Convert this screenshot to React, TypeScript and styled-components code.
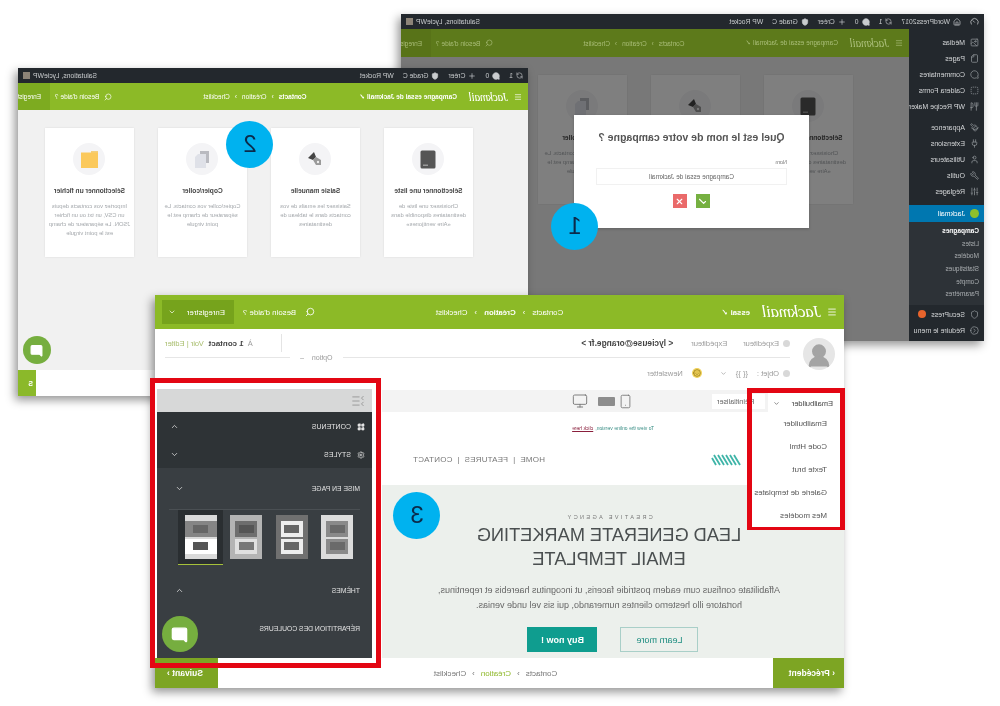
import React from 'react';
import styled, { createGlobalStyle } from 'styled-components';
import {
  Image, File, MessageCircle, SquareDashed, Utensils, Paintbrush, Plug, User, Wrench, Sliders, Shield,
  CircleChevronLeft, Home, Gauge, RefreshCw, Plus, Search, ChevronDown, ChevronUp, Menu, Monitor,
  Smartphone, LayoutGrid, Settings, Check, X, Smile, ListCollapse, UserRound, MessageSquare,
} from 'lucide-react';

const GlobalStyle = createGlobalStyle`
  html, body { margin: 0; padding: 0; background: #fff; }
  body { font-family: "Liberation Sans", Arial, sans-serif; }
  * { box-sizing: border-box; }
`;

// the whole reference is a mirrored picture, so the page is built normally and flipped once
const Stage = styled.div`
  position: relative;
  width: 1000px;
  height: 706px;
  overflow: hidden;
  background: #fff;
  transform: scaleX(-1);
  filter: blur(0.45px);
`;

const Win = styled.section<{ $x: number; $y: number; $w: number; $h: number }>`
  position: absolute;
  left: ${p => p.$x}px;
  top: ${p => p.$y}px;
  width: ${p => p.$w}px;
  height: ${p => p.$h}px;
  display: flex;
  flex-direction: column;
  background: #fff;
  box-shadow: 3px 4px 9px rgba(0, 0, 0, 0.42);
`;

const AdminBar = styled.div`
  height: 15px;
  flex: none;
  background: #23282d;
  color: #c9ccce;
  font-size: 6.8px;
  display: flex;
  align-items: center;
  gap: 9px;
  padding: 0 5px;
`;

const AdminItem = styled.span`
  display: inline-flex;
  align-items: center;
  gap: 3px;
  white-space: nowrap;
`;

const AdminEnd = styled(AdminItem)`
  margin-left: auto;
`;

const Avatarlet = styled.span`
  width: 7px;
  height: 7px;
  background: #8d8478;
`;

const GreenBar = styled.header<{ $h: number; $bg: string; $fs: number; $pr: number; $pl: number }>`
  height: ${p => p.$h}px;
  flex: none;
  background: ${p => p.$bg};
  color: #fff;
  font-size: ${p => p.$fs}px;
  display: grid;
  grid-template-columns: 1fr auto 1fr;
  align-items: center;
  padding: 0 ${p => p.$pr}px 0 ${p => p.$pl}px;
`;

const BarLeft = styled.div<{ $dim?: boolean }>`
  display: flex;
  align-items: center;
  gap: 6px;
  color: ${p => (p.$dim ? '#a9bd78' : 'inherit')};
`;

const BarRight = styled.div<{ $dim?: boolean; $gap: number }>`
  display: flex;
  align-items: center;
  justify-content: flex-end;
  gap: ${p => p.$gap}px;
  color: ${p => (p.$dim ? '#a9bd78' : 'inherit')};
`;

const Logo = styled.span<{ $fs: number }>`
  font-family: "Liberation Serif", serif;
  font-style: italic;
  font-size: ${p => p.$fs}px;
  letter-spacing: -0.3px;
  margin-right: 6px;
`;

const Crumbs = styled.div<{ $gap: number; $ml?: number; $dim?: boolean }>`
  display: flex;
  align-items: center;
  gap: ${p => p.$gap}px;
  margin-left: ${p => p.$ml ?? 0}px;
  color: ${p => (p.$dim ? '#a9bd78' : 'inherit')};
`;

const Crumb = styled.span<{ $on?: boolean; $green?: boolean }>`
  font-weight: ${p => (p.$on ? 700 : 400)};
  color: ${p => (p.$green ? '#8fb82a' : 'inherit')};
`;

const SaveButton = styled.div<{ $w: number; $h: number; $bg: string }>`
  width: ${p => p.$w}px;
  height: ${p => p.$h}px;
  background: ${p => p.$bg};
  display: flex;
  align-items: center;
  justify-content: space-between;
  padding: 0 6px 0 9px;
  overflow: hidden;
  white-space: nowrap;
`;

const Desk = styled.div`
  flex: 1;
  display: flex;
  min-height: 0;
`;

const SideMenu = styled.nav`
  width: 75px;
  flex: none;
  background: #23282d;
  color: #d4d6d8;
  font-size: 7px;
  display: flex;
  flex-direction: column;
  padding-top: 5px;
`;

const SideItem = styled.div<{ $active?: boolean; $after?: number }>`
  height: ${p => (p.$active ? 17 : 16)}px;
  display: flex;
  align-items: center;
  gap: 5px;
  padding-left: 5px;
  margin-bottom: ${p => p.$after ?? 0}px;
  white-space: nowrap;
  background: ${p => (p.$active ? '#0077b0' : 'transparent')};
  color: ${p => (p.$active ? '#fff' : 'inherit')};
  svg { color: #8f9498; flex: none; }
`;

const JackDot = styled.span`
  width: 9px;
  height: 9px;
  border-radius: 50%;
  background: #8fc02c;
  flex: none;
`;

const SubMenu = styled.div`
  background: #2d3237;
  padding: 3px 0 4px 5px;
  display: flex;
  flex-direction: column;
  margin-bottom: 1px;
`;

const SubItem = styled.span<{ $on?: boolean }>`
  height: 12.7px;
  line-height: 12.7px;
  font-size: 6.5px;
  color: ${p => (p.$on ? '#fff' : '#a9adb0')};
  font-weight: ${p => (p.$on ? 700 : 400)};
`;

const Badge = styled.span`
  width: 8px;
  height: 8px;
  border-radius: 50%;
  background: #e8642c;
`;

const Main = styled.div`
  flex: 1;
  display: flex;
  flex-direction: column;
  min-width: 0;
`;

const Content = styled.div<{ $pad: number; $pt: number }>`
  position: relative;
  flex: 1;
  background: #f1f1f1;
  display: flex;
  align-items: flex-start;
  gap: 24px;
  padding: ${p => p.$pt}px 0 0 ${p => p.$pad}px;
`;

const Shade = styled.div`
  position: absolute;
  inset: 0;
  background: rgba(0, 0, 0, 0.5);
`;

const Card = styled.article`
  width: 89px;
  height: 129px;
  flex: none;
  background: #fff;
  box-shadow: 0 0 2px rgba(0, 0, 0, 0.1);
  display: flex;
  flex-direction: column;
  align-items: center;
  padding: 15px 3px 0;
  text-align: center;
`;

const Disc = styled.div`
  width: 32px;
  height: 32px;
  border-radius: 50%;
  background: #f4f4f6;
  display: flex;
  align-items: center;
  justify-content: center;
`;

const CardTitle = styled.h4`
  margin: 11px 0 7px;
  font-size: 6.6px;
  line-height: 9px;
  color: #444;
  white-space: nowrap;
`;

const CardText = styled.p`
  margin: 0;
  font-size: 5.8px;
  line-height: 9px;
  color: #a3a7ab;
`;

const Modal = styled.div`
  position: absolute;
  left: 100px;
  top: 58px;
  width: 235px;
  height: 113px;
  background: #fff;
  padding: 15px 22px 0;
  display: flex;
  flex-direction: column;
  box-shadow: 0 1px 3px rgba(0, 0, 0, 0.2);
`;

const ModalTitle = styled.h3`
  margin: 0 0 15px;
  font-size: 10.5px;
  line-height: 14px;
  color: #555;
  text-align: center;
  white-space: nowrap;
`;

const ModalLabel = styled.label`
  font-size: 5.5px;
  color: #777;
  margin-bottom: 3px;
`;

const ModalInput = styled.div`
  height: 17px;
  border: 1px solid #f1f1f1;
  font-size: 6.5px;
  color: #666;
  display: flex;
  align-items: center;
  justify-content: center;
`;

const ModalActions = styled.div`
  display: flex;
  justify-content: center;
  gap: 9px;
  margin-top: 9px;
`;

const SquareBtn = styled.div<{ $bg: string }>`
  width: 14px;
  height: 14px;
  background: ${p => p.$bg};
  color: #fff;
  display: flex;
  align-items: center;
  justify-content: center;
`;

const BottomStrip = styled.div`
  height: 26px;
  flex: none;
  background: #fff;
  display: flex;
  justify-content: flex-end;
`;

const StripBtn = styled.div`
  width: 18px;
  background: #8bb92a;
  color: #fff;
  font-size: 7px;
  display: flex;
  align-items: center;
  padding-left: 3px;
  font-weight: 700;
`;

const Bubble = styled.div<{ $x: number; $y: number; $size: number }>`
  position: absolute;
  left: ${p => p.$x}px;
  top: ${p => p.$y}px;
  width: ${p => p.$size}px;
  height: ${p => p.$size}px;
  border-radius: 50%;
  background: #76ae3f;
  color: #fff;
  display: flex;
  align-items: center;
  justify-content: center;
  z-index: 5;
  svg { fill: #fff; }
`;

const Step = styled.div<{ $cx: number; $cy: number }>`
  position: absolute;
  left: ${p => p.$cx - 23.5}px;
  top: ${p => p.$cy - 23.5}px;
  width: 47px;
  height: 47px;
  border-radius: 50%;
  background: #00b2ef;
  color: #0b2a4a;
  font-size: 24px;
  display: flex;
  align-items: center;
  justify-content: center;
  z-index: 10;
`;

/* third window */
const Recipients = styled.div`
  height: 61px;
  flex: none;
  display: grid;
  grid-template-columns: 48px 1fr;
  background: #fff;
`;

const AvatarCol = styled.div`
  display: flex;
  justify-content: center;
  padding: 9px 0 0 2px;
`;

const AvatarPic = styled.div`
  width: 32px;
  height: 32px;
  border-radius: 50%;
  background: #e6e6e6;
  overflow: hidden;
  display: flex;
  align-items: flex-end;
  justify-content: center;
  svg { fill: #a4a4a4; color: #a4a4a4; }
`;

const RecCol = styled.div`
  display: flex;
  flex-direction: column;
  font-size: 7.5px;
  color: #8c8c8c;
  padding-right: 10px;
  padding-left: 6px;
`;

const RecTop = styled.div`
  height: 28px;
  display: flex;
  align-items: center;
`;

const Pale = styled.span<{ $ml?: number }>`
  margin-left: ${p => p.$ml ?? 0}px;
  color: #9b9b9b;
  white-space: nowrap;
  display: inline-flex;
  align-items: center;
  gap: 4px;
`;

const Strong = styled.span<{ $ml?: number; $fs: number }>`
  margin-left: ${p => p.$ml ?? 0}px;
  font-weight: 700;
  font-size: ${p => p.$fs}px;
  color: #444;
  white-space: nowrap;
`;

const VRule = styled.span`
  width: 1px;
  height: 18px;
  background: #e4e4e4;
  margin-left: auto;
`;

const Links = styled.span`
  color: #a8bd6c;
  margin-left: 5px;
  white-space: nowrap;
`;

const Dot = styled.span`
  width: 7px;
  height: 7px;
  border-radius: 50%;
  background: #d8d8d8;
  display: inline-block;
`;

const OptionRule = styled.div`
  display: flex;
  align-items: center;
  height: 1px;
  background: #e6e6e6;
  justify-content: flex-end;
`;

const OptionTag = styled.span`
  background: #fff;
  padding: 0 10px;
  margin-right: 125px;
  font-size: 7px;
  color: #999;
  display: inline-flex;
  gap: 8px;
`;

const RecBottom = styled.div`
  flex: 1;
  display: flex;
  align-items: center;
  gap: 9px;
  padding-bottom: 2px;
  svg { flex: none; }
`;

const Emoji = styled.span`
  width: 10px;
  height: 10px;
  border-radius: 50%;
  background: #f0d25a;
  color: #8a6d10;
  display: flex;
  align-items: center;
  justify-content: center;
  margin-left: 9px;
`;

const Workspace = styled.div`
  flex: 1;
  display: flex;
  min-height: 0;
`;

const EmailCol = styled.div`
  width: 462px;
  flex: none;
  display: flex;
  flex-direction: column;
`;

const Toolbar = styled.div`
  height: 22px;
  flex: none;
  background: #f3f3f3;
  display: flex;
  align-items: center;
  padding-left: 79px;
  color: #777;
  font-size: 7px;
`;

const ResetBtn = styled.div`
  height: 15px;
  width: 53px;
  background: #fff;
  color: #666;
  display: flex;
  align-items: center;
  justify-content: flex-end;
  padding-right: 5px;
  font-size: 7.2px;
  white-space: nowrap;
`;

const Devices = styled.div`
  display: flex;
  align-items: center;
  gap: 3px;
  margin-left: 79px;
`;

const TabletShape = styled.span`
  width: 17px;
  height: 9px;
  border-radius: 1px;
  background: #8d8d8d;
`;

const Preheader = styled.div`
  height: 32px;
  flex: none;
  font-size: 5px;
  color: #3b8f86;
  display: flex;
  align-items: center;
  justify-content: center;
  gap: 2px;
`;

const Underlined = styled.span`
  color: #8a1f3c;
  text-decoration: underline;
`;

const EmailNav = styled.div`
  height: 41px;
  flex: none;
  display: flex;
  align-items: center;
  justify-content: space-between;
  padding: 0 31px 10px 103px;
  font-size: 8px;
  color: #777;
  letter-spacing: 0.2px;
`;

const Hero = styled.div`
  flex: 1;
  background: #ecf0ec;
  display: flex;
  flex-direction: column;
  align-items: center;
  padding: 29px 0 0 8px;
`;

const Eyebrow = styled.div`
  font-size: 5.5px;
  letter-spacing: 2.4px;
  color: #777;
  margin-bottom: 4px;
`;

const HeroTitle = styled.h1`
  margin: 0 0 12px;
  font-size: 18.2px;
  line-height: 23.5px;
  font-weight: 400;
  color: #4a4f50;
  text-align: center;
  white-space: nowrap;
`;

const HeroText = styled.p`
  margin: 0 0 14px;
  font-size: 9px;
  line-height: 15px;
  color: #666;
  text-align: center;
  width: 360px;
`;

const HeroActions = styled.div`
  display: flex;
  gap: 23px;
  margin-right: 8px;
`;

const HeroBtn = styled.div<{ $solid?: boolean; $w: number }>`
  width: ${p => p.$w}px;
  height: 25px;
  border: 1px solid ${p => (p.$solid ? '#0f9d8f' : '#a9cfc8')};
  background: ${p => (p.$solid ? '#0f9d8f' : 'transparent')};
  color: ${p => (p.$solid ? '#fff' : '#1d8d80')};
  font-size: 9px;
  font-weight: ${p => (p.$solid ? 700 : 400)};
  display: flex;
  align-items: center;
  justify-content: center;
`;

const Panel = styled.aside`
  width: 215px;
  flex: none;
  margin-left: 10px;
  display: flex;
  flex-direction: column;
`;

const PanelBar = styled.div`
  height: 23px;
  margin-top: -1px;
  flex: none;
  background: #d7d8d8;
  color: #8a8a8a;
  display: flex;
  align-items: center;
  padding-left: 7px;
`;

const DarkRow = styled.div<{ $h: number }>`
  height: ${p => p.$h}px;
  flex: none;
  background: #2e3336;
  color: #e4e4e4;
  font-size: 7px;
  display: flex;
  align-items: center;
  justify-content: space-between;
  padding: 0 13px 0 7px;
`;

const RowLabel = styled.span`
  display: inline-flex;
  align-items: center;
  gap: 6px;
  white-space: nowrap;
`;

const Styles = styled.div`
  flex: 1;
  background: #393e42;
  color: #e4e4e4;
  font-size: 6.8px;
  padding: 0 12px;
  display: flex;
  flex-direction: column;
`;

const StyleHead = styled.div<{ $h: number; $pr?: number }>`
  height: ${p => p.$h}px;
  flex: none;
  display: flex;
  align-items: center;
  justify-content: space-between;
  white-space: nowrap;
  padding-right: ${p => p.$pr ?? 0}px;
`;

const ThumbGrid = styled.div`
  display: grid;
  grid-template-columns: repeat(4, 45.5px);
  height: 56px;
  flex: none;
  border-top: 1px solid #4a4f53;
`;

const ThumbCell = styled.div<{ $on?: boolean }>`
  display: flex;
  align-items: center;
  justify-content: center;
  border-bottom: 1px solid ${p => (p.$on ? '#a6c13a' : 'transparent')};
  background: ${p => (p.$on ? '#2a2e31' : 'transparent')};
`;

const ThumbPage = styled.div<{ $bg: string }>`
  width: 32px;
  height: 44px;
  background: ${p => p.$bg};
  padding: 6px 0 5px;
  display: flex;
  flex-direction: column;
  align-items: center;
  gap: 2px;
`;

const ThumbBlock = styled.div<{ $bg: string; $ink: string; $wide?: boolean }>`
  flex: 1;
  align-self: ${p => (p.$wide ? 'stretch' : 'center')};
  width: ${p => (p.$wide ? 'auto' : '22px')};
  background: ${p => p.$bg};
  display: flex;
  align-items: center;
  justify-content: center;
  &::after {
    content: '';
    width: 15px;
    height: 8px;
    background: ${p => p.$ink};
  }
`;

const StepFooter = styled.footer`
  height: 30px;
  flex: none;
  background: #fff;
  display: grid;
  grid-template-columns: 71px 1fr 63px;
  align-items: center;
  font-size: 8px;
  color: #777;
`;

const FootBtn = styled.div<{ $end?: boolean }>`
  height: 30px;
  background: #7da523;
  color: #fff;
  font-weight: 700;
  font-size: 8.5px;
  display: flex;
  align-items: center;
  justify-content: ${p => (p.$end ? 'flex-end' : 'flex-start')};
  gap: 4px;
  padding: 0 12px 0 9px;
`;

const FootCrumbs = styled.div`
  display: flex;
  justify-content: center;
  gap: 6px;
`;

const RedFrame = styled.div<{ $x: number; $y: number; $w: number; $h: number }>`
  position: absolute;
  left: ${p => p.$x}px;
  top: ${p => p.$y}px;
  width: ${p => p.$w}px;
  height: ${p => p.$h}px;
  border: 5px solid #e30613;
  z-index: 3;
`;

const MenuFrame = styled(RedFrame)`
  display: flex;
  flex-direction: column;
  font-size: 7.9px;
  color: #555;
`;

const MenuSelect = styled.div`
  height: 20px;
  width: 72px;
  flex: none;
  display: flex;
  align-items: center;
  justify-content: space-between;
  padding: 0 5px 0 7px;
  background: #fff;
  color: #444;
  font-size: 7.5px;
  white-space: nowrap;
`;

const MenuList = styled.div`
  flex: 1;
  background: #fff;
  display: flex;
  flex-direction: column;
  margin-top: -1px;
`;

const MenuItem = styled.div`
  height: 23px;
  flex: none;
  display: flex;
  align-items: center;
  padding-left: 13px;
  white-space: nowrap;
`;

const NotebookIcon = () => (
  <svg width="16" height="19" viewBox="0 0 16 19">
    <rect x="0.5" y="0.5" width="15" height="18" rx="1.5" fill="#555" />
    <rect x="8" y="14.5" width="5" height="1.5" fill="#999" />
  </svg>
);

const PenIcon = () => (
  <svg width="18" height="18" viewBox="0 0 18 18">
    <path d="M10 2 16 8 11 10 8 7Z" fill="#444" />
    <path d="M8 7 11 10 8 15 3 15 3 10Z" fill="#9a9a9a" />
    <circle cx="6" cy="12" r="1.2" fill="#eee" />
  </svg>
);

const SheetsIcon = () => (
  <svg width="16" height="19" viewBox="0 0 16 19">
    <rect x="1" y="1" width="9" height="12" fill="#b9bac0" />
    <path d="M4 4h8l3 3v11H4Z" fill="#dfe1e8" />
  </svg>
);

const FolderIcon = () => (
  <svg width="17" height="17" viewBox="0 0 17 17">
    <rect x="0" y="0" width="7" height="3" fill="#f3cf7e" />
    <rect x="0" y="1.5" width="17" height="15.5" fill="#fbc95c" />
  </svg>
);

const sideTop = [
  { icon: Image, label: 'Médias' },
  { icon: File, label: 'Pages' },
  { icon: MessageCircle, label: 'Commentaires' },
  { icon: SquareDashed, label: 'Caldera Forms' },
  { icon: Utensils, label: 'WP Recipe Maker', after: 5 },
  { icon: Paintbrush, label: 'Apparence' },
  { icon: Plug, label: 'Extensions' },
  { icon: User, label: 'Utilisateurs' },
  { icon: Wrench, label: 'Outils' },
  { icon: Sliders, label: 'Réglages', after: 6 },
];

const subItems = ['Listes', 'Modèles', 'Statistiques', 'Compte', 'Paramètres'];

const cards = [
  { icon: NotebookIcon, title: 'Sélectionner une liste', text: 'Choisissez une liste de destinataires disponible dans «Aire ventijones»' },
  { icon: PenIcon, title: 'Saisie manuelle', text: 'Saisissez les emails de vos contacts dans le tableau de destinataires' },
  { icon: SheetsIcon, title: 'Copier/coller', text: 'Copier/coller vos contacts. Le séparateur de champ est le point virgule' },
  { icon: FolderIcon, title: 'Sélectionner un fichier', text: 'Importez vos contacts depuis un CSV, un txt ou un fichier JSON. Le séparateur de champ est le point virgule' },
];

const thumbs = [
  { bg: '#dcdcdc', blocks: [{ bg: '#8a8a8a', ink: '#6a6a6a' }, { bg: '#8a8a8a', ink: '#6a6a6a' }] },
  { bg: '#707070', blocks: [{ bg: '#eeeeee', ink: '#666' }, { bg: '#eeeeee', ink: '#666' }] },
  { bg: '#b4b4b4', blocks: [{ bg: '#6e6e6e', ink: '#555' }, { bg: '#e0e0e0', ink: '#777' }] },
  { bg: '#dadada', blocks: [{ bg: '#858585', ink: '#666', wide: true }, { bg: '#fff', ink: '#555', wide: true }] },
];

const AdminTop: React.FC<{ full?: boolean }> = ({ full }) => (
  <AdminBar>
    {full && <Gauge size={9} />}
    {full && <AdminItem><Home size={8} /> WordPress2017</AdminItem>}
    <AdminItem><RefreshCw size={7} /> 1</AdminItem>
    <AdminItem><MessageCircle size={8} fill="currentColor" /> 0</AdminItem>
    <AdminItem><Plus size={8} /> Créer</AdminItem>
    <AdminItem><Shield size={8} fill="currentColor" /> Grade C</AdminItem>
    <AdminItem>WP Rocket</AdminItem>
    <AdminEnd>Salutations, LycieWP <Avatarlet /></AdminEnd>
  </AdminBar>
);

const WpWindow = () => (
  <Win $x={16} $y={14} $w={583} $h={327}>
    <AdminTop full />
    <Desk>
      <SideMenu>
        {sideTop.map(({ icon: Icon, label, after }) => (
          <SideItem key={label} $after={after}><Icon size={9} /> {label}</SideItem>
        ))}
        <SideItem $active><JackDot /> Jackmail</SideItem>
        <SubMenu>
          <SubItem $on>Campagnes</SubItem>
          {subItems.map(s => <SubItem key={s}>{s}</SubItem>)}
        </SubMenu>
        <SideItem><Shield size={9} /> SecuPress <Badge /></SideItem>
        <SideItem><CircleChevronLeft size={9} /> Réduire le menu</SideItem>
      </SideMenu>
      <Main>
        <GreenBar $h={28} $bg="#5d7a1b" $fs={6.5} $pr={0} $pl={6}>
          <BarLeft $dim>
            <Menu size={8} />
            <Logo $fs={11.5}>Jackmail</Logo>
            <span>Campagne essai de Jackmail ✓</span>
          </BarLeft>
          <Crumbs $gap={5} $ml={36} $dim>
            <Crumb>Contacts</Crumb><span>›</span><Crumb>Création</Crumb><span>›</span><Crumb>Checklist</Crumb>
          </Crumbs>
          <BarRight $dim $gap={5}>
            <Search size={8} /> Besoin d'aide ?
            <SaveButton $w={30} $h={28} $bg="#587318">Enregistrer</SaveButton>
          </BarRight>
        </GreenBar>
        <Content $pad={56} $pt={18}>
          {cards.slice(0, 3).map(c => (
            <Card key={c.title}>
              <Disc><c.icon /></Disc>
              <CardTitle>{c.title}</CardTitle>
              <CardText>{c.text}</CardText>
            </Card>
          ))}
          <Shade />
          <Modal>
            <ModalTitle>Quel est le nom de votre campagne ?</ModalTitle>
            <ModalLabel>Nom</ModalLabel>
            <ModalInput>Campagne essai de Jackmail</ModalInput>
            <ModalActions>
              <SquareBtn $bg="#76b041"><Check size={9} strokeWidth={3} /></SquareBtn>
              <SquareBtn $bg="#ea6a6a"><X size={9} strokeWidth={3} /></SquareBtn>
            </ModalActions>
          </Modal>
        </Content>
      </Main>
    </Desk>
  </Win>
);

const SourceWindow = () => (
  <Win $x={472} $y={68} $w={510} $h={328}>
    <AdminTop />
    <GreenBar $h={27} $bg="#8cba27" $fs={6.5} $pr={0} $pl={6}>
      <BarLeft>
        <Menu size={8} />
        <Logo $fs={11.5}>Jackmail</Logo>
        <strong>Campagne essai de Jackmail ✓</strong>
      </BarLeft>
      <Crumbs $gap={5} $ml={30}>
        <Crumb $on>Contacts</Crumb><span>›</span><Crumb>Création</Crumb><span>›</span><Crumb>Checklist</Crumb>
      </Crumbs>
      <BarRight $gap={5}>
        <Search size={8} /> Besoin d'aide ?
        <SaveButton $w={32} $h={27} $bg="#7dab20">Enregistrer</SaveButton>
      </BarRight>
    </GreenBar>
    <Content $pad={55} $pt={18}>
      {cards.map(c => (
        <Card key={c.title}>
          <Disc><c.icon /></Disc>
          <CardTitle>{c.title}</CardTitle>
          <CardText>{c.text}</CardText>
        </Card>
      ))}
    </Content>
    <BottomStrip>
      <StripBtn>S</StripBtn>
    </BottomStrip>
    <Bubble $x={477} $y={268} $size={28}><MessageSquare size={13} /></Bubble>
  </Win>
);

const EditorWindow = () => (
  <Win $x={156} $y={295} $w={689} $h={393}>
    <GreenBar $h={34} $bg="#8cba27" $fs={7.8} $pr={7} $pl={7}>
      <BarLeft>
        <Menu size={10} />
        <Logo $fs={17}>Jackmail</Logo>
        <strong>essai ✓</strong>
      </BarLeft>
      <Crumbs $gap={7}>
        <Crumb>Contacts</Crumb><span>›</span><Crumb $on>Création</Crumb><span>›</span><Crumb>Checklist</Crumb>
      </Crumbs>
      <BarRight $gap={9}>
        <Search size={10} /> Besoin d'aide ?
        <SaveButton $w={72} $h={24} $bg="#76a31c">
          <span>Enregistrer</span>
          <ChevronDown size={8} />
        </SaveButton>
      </BarRight>
    </GreenBar>
    <Recipients>
      <AvatarCol>
        <AvatarPic><UserRound size={28} /></AvatarPic>
      </AvatarCol>
      <RecCol>
        <RecTop>
          <Pale><Dot /> Expéditeur</Pale>
          <Pale $ml={16}>Expéditeur</Pale>
          <Strong $ml={18} $fs={8.4}>&lt; lycieuse@orange.fr &gt;</Strong>
          <VRule />
          <Pale $ml={28}>À</Pale>
          <Strong $ml={4} $fs={8}>1 contact</Strong>
          <Links>Voir | Editer</Links>
        </RecTop>
        <OptionRule>
          <OptionTag><span>Option</span><span>–</span></OptionTag>
        </OptionRule>
        <RecBottom>
          <Pale><Dot /> Objet :</Pale>
          <Pale>{'{{ }}'}</Pale>
          <ChevronDown size={7} />
          <Emoji><Smile size={8} /></Emoji>
          <Pale>Newsletter</Pale>
        </RecBottom>
      </RecCol>
    </Recipients>
    <Workspace>
      <EmailCol>
        <Toolbar>
          <ResetBtn>Réinitialiser</ResetBtn>
          <Devices>
            <Smartphone size={15} strokeWidth={1.4} />
            <TabletShape />
            <Monitor size={16} strokeWidth={1.4} style={{ marginLeft: 7 }} />
          </Devices>
        </Toolbar>
        <Preheader>
          To view the online version, <Underlined>click here</Underlined>
        </Preheader>
        <EmailNav>
          <svg width="30" height="12" viewBox="0 0 30 12" fill="none" stroke="#3fb5a8" strokeWidth="1.8">
            <path d="M1 11 7 1M5 11 11 1M9 11 15 1M13 11 19 1M17 11 23 1M21 11 27 1M25 11 29 4" />
          </svg>
          <span>HOME &nbsp;|&nbsp; FEATURES &nbsp;|&nbsp; CONTACT</span>
        </EmailNav>
        <Hero>
          <Eyebrow>CREATIVE AGENCY</Eyebrow>
          <HeroTitle>LEAD GENERATE MARKETING<br />EMAIL TEMPLATE</HeroTitle>
          <HeroText>
            Affabilitate confisus cum eadem postridie faceris, ut incognitus haerebis et repentinus,
            hortatore illo hesterno clientes numerando, qui sis vel unde venias.
          </HeroText>
          <HeroActions>
            <HeroBtn $w={78}>Learn more</HeroBtn>
            <HeroBtn $w={70} $solid>Buy now !</HeroBtn>
          </HeroActions>
        </Hero>
      </EmailCol>
      <Panel>
        <PanelBar><ListCollapse size={14} strokeWidth={1.3} /></PanelBar>
        <DarkRow $h={29}>
          <RowLabel><LayoutGrid size={8} fill="currentColor" /> CONTENUS</RowLabel>
          <ChevronUp size={9} />
        </DarkRow>
        <DarkRow $h={27}>
          <RowLabel><Settings size={8} /> STYLES</RowLabel>
          <ChevronDown size={9} />
        </DarkRow>
        <Styles>
          <StyleHead $h={41} $pr={6}>
            <span>MISE EN PAGE</span>
            <ChevronDown size={9} />
          </StyleHead>
          <ThumbGrid>
            {thumbs.map((t, i) => (
              <ThumbCell key={i} $on={i === 3}>
                <ThumbPage $bg={t.bg}>
                  {t.blocks.map((b, j) => (
                    <ThumbBlock key={j} $bg={b.bg} $ink={b.ink} $wide={b.wide} />
                  ))}
                </ThumbPage>
              </ThumbCell>
            ))}
          </ThumbGrid>
          <StyleHead $h={50} $pr={6}>
            <span>THÈMES</span>
            <ChevronUp size={9} />
          </StyleHead>
          <StyleHead $h={26}>
            <span>RÉPARTITION DES COULEURS</span>
          </StyleHead>
        </Styles>
      </Panel>
    </Workspace>
    <StepFooter>
      <FootBtn>‹ Précédent</FootBtn>
      <FootCrumbs>
        <Crumb>Contacts</Crumb><span>›</span><Crumb $green>Création</Crumb><span>›</span><Crumb>Checklist</Crumb>
      </FootCrumbs>
      <FootBtn $end>Suivant ›</FootBtn>
    </StepFooter>
    <MenuFrame $x={-1} $y={93} $w={98} $h={142}>
      <MenuSelect><span>Emailbuilder</span><ChevronDown size={7} /></MenuSelect>
      <MenuList>
        <MenuItem>Emailbuilder</MenuItem>
        <MenuItem>Code Html</MenuItem>
        <MenuItem>Texte brut</MenuItem>
        <MenuItem>Galerie de templates</MenuItem>
        <MenuItem>Mes modèles</MenuItem>
      </MenuList>
    </MenuFrame>
    <RedFrame $x={463} $y={83} $w={231} $h={290} />
    <Bubble $x={646} $y={321} $size={36}><MessageSquare size={17} /></Bubble>
  </Win>
);

const App: React.FC = () => (
  <>
    <GlobalStyle />
    <Stage>
      <WpWindow />
      <SourceWindow />
      <EditorWindow />
      <Step $cx={425} $cy={226}>1</Step>
      <Step $cx={750} $cy={144}>2</Step>
      <Step $cx={583} $cy={515}>3</Step>
    </Stage>
  </>
);

export default App;
